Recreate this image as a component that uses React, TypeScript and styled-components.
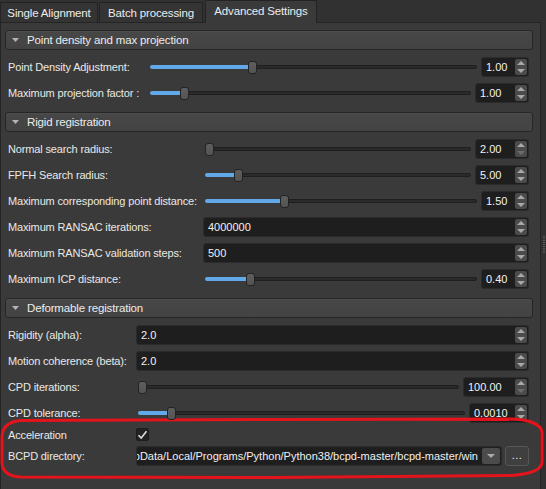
import React from 'react';
import styled, { createGlobalStyle } from 'styled-components';

const GlobalStyle = createGlobalStyle`
  html, body { margin: 0; padding: 0; background: #313131; }
  body {
    font-family: "Liberation Sans", Arial, sans-serif;
    font-size: 11px;
    letter-spacing: -0.15px;
    color: #e9e9e6;
  }
  * { box-sizing: border-box; }
`;

const Window = styled.div`
  position: relative;
  width: 546px;
  height: 489px;
  overflow: hidden;
  display: flex;
  background: #313131;
`;

const Main = styled.div`
  width: 541px;
  display: flex;
  flex-direction: column;
`;

const TabBar = styled.div`
  height: 22px;
  display: flex;
  align-items: flex-end;
`;

const Tab = styled.div<{ $w: number; $active?: boolean; $ml?: number }>`
  width: ${(p) => p.$w}px;
  margin-left: ${(p) => p.$ml ?? 0}px;
  height: ${(p) => (p.$active ? 23 : 20)}px;
  margin-bottom: ${(p) => (p.$active ? -1 : 0)}px;
  position: relative;
  z-index: ${(p) => (p.$active ? 1 : 0)};
  background: ${(p) => (p.$active ? '#3a3a3a' : '#343434')};
  border: 1px solid #232323;
  border-bottom: none;
  border-radius: 2px 2px 0 0;
  display: flex;
  align-items: center;
  justify-content: center;
  padding-bottom: ${(p) => (p.$active ? 2 : 0)}px;
  color: #ececec;
  font-size: 11.5px;
  white-space: nowrap;
`;

const Panel = styled.div`
  flex: 1;
  background: #3a3a3a;
  border: 1px solid #242424;
  border-bottom: none;
  padding: 7px 7px 0 4px;
  display: flex;
  flex-direction: column;
  gap: 9px;
`;

const Section = styled.div`
  display: flex;
  flex-direction: column;
  gap: 7px;
`;

const GroupHeader = styled.div`
  height: 20px;
  border: 1px solid #262626;
  border-radius: 3px;
  background: linear-gradient(#474747, #434343);
  box-shadow: inset 0 1px 0 #4e4e4e;
  display: flex;
  align-items: center;
  gap: 8px;
  padding-left: 6px;
  color: #ececec;
  font-size: 11.5px;
`;

const FormGrid = styled.div<{ $labelW: number }>`
  display: grid;
  grid-template-columns: ${(p) => p.$labelW}px 1fr;
  grid-auto-rows: auto;
  row-gap: 6px;
  padding: 0 4px 0 3px;
`;

const Label = styled.div<{ $h?: number }>`
  height: ${(p) => p.$h ?? 20}px;
  display: flex;
  align-items: center;
  white-space: nowrap;
`;

const Field = styled.div<{ $h?: number }>`
  height: ${(p) => p.$h ?? 20}px;
  display: flex;
  align-items: center;
  gap: 2px;
  min-width: 0;
`;

const SliderTrack = styled.div`
  flex: 1;
  margin: 0 2px;
  height: 20px;
  display: flex;
  align-items: center;
  min-width: 0;
`;

const GrooveFill = styled.div`
  height: 4px;
  background: #62a9e9;
  border-radius: 2px 0 0 2px;
  margin-right: -2px;
`;

const GrooveRest = styled.div`
  flex: 1;
  height: 4px;
  background: #2a2a2a;
  border: 1px solid #1f1f1f;
  border-radius: 0 2px 2px 0;
  margin-left: -2px;
`;

const Handle = styled.div`
  width: 9px;
  height: 13px;
  position: relative;
  z-index: 1;
  border: 1px solid #232323;
  border-radius: 3px;
  background: linear-gradient(#5e5e5e, #545454);
  flex: none;
`;

const SpinBox = styled.div<{ $w?: number }>`
  width: ${(p) => (p.$w ? `${p.$w}px` : '100%')};
  flex: none;
  height: 20px;
  background: #1e1e1e;
  border: 1px solid #2b2b2b;
  border-radius: 3px;
  display: flex;
  align-items: stretch;
`;

const SpinText = styled.div`
  flex: 1;
  display: flex;
  align-items: center;
  padding-left: 4px;
  color: #f2f2f2;
  letter-spacing: 0;
  overflow: hidden;
  white-space: nowrap;
`;

const SpinButtons = styled.div`
  width: 12px;
  margin: 1px 1px 1px 0;
  background: #4b4b4b;
  border-radius: 2px;
  display: flex;
  flex-direction: column;
  align-items: center;
  justify-content: center;
  gap: 4px;
`;

const Arrow = ({ down, dim }: { down?: boolean; dim?: boolean }) => (
  <svg width="8" height="4" viewBox="0 0 8 4">
    <polygon
      points={down ? '0,0 8,0 4,4' : '0,4 8,4 4,0'}
      fill={dim ? '#6c6c6c' : '#a9a9a9'}
    />
  </svg>
);

const CheckBox = styled.div`
  width: 13px;
  height: 13px;
  background: #232323;
  border: 1px solid #1c1c1c;
  border-radius: 2px;
  display: flex;
  align-items: center;
  justify-content: center;
`;

const Combo = styled.div`
  flex: 1;
  min-width: 0;
  height: 20px;
  background: #1e1e1e;
  border: 1px solid #2b2b2b;
  border-radius: 3px;
  display: flex;
  align-items: stretch;
`;

const ComboText = styled.div`
  flex: 1;
  min-width: 0;
  overflow: hidden;
  display: flex;
  justify-content: flex-end;
  align-items: center;
  padding-right: 3px;
  white-space: nowrap;
  color: #f0f0f0;
  letter-spacing: 0;
`;

const ComboButton = styled.div`
  width: 18px;
  margin: 1px;
  background: #4b4b4b;
  border-radius: 2px;
  display: flex;
  align-items: center;
  justify-content: center;
`;

const ToolButton = styled.div`
  width: 24px;
  height: 20px;
  flex: none;
  margin-left: 1px;
  background: #3f3f3f;
  border: 1px solid #575757;
  border-radius: 3px;
  display: flex;
  align-items: center;
  justify-content: center;
  padding-bottom: 2px;
  color: #e8e8e8;
  letter-spacing: 0.5px;
`;

const Splitter = styled.div`
  flex: 1;
  display: flex;
  align-items: center;
  justify-content: center;
  padding-left: 1px;
`;

const Grip = styled.div`
  width: 2px;
  height: 18px;
  background: repeating-linear-gradient(#5a5a5a 0 1px, #333 1px 2px);
`;

const Annotation = styled.svg`
  position: absolute;
  left: 0;
  top: 0;
  pointer-events: none;
`;

type Row =
  | { kind: 'slider'; label: string; frac: number; value: string; spinW: number; dimDown?: boolean }
  | { kind: 'spin'; label: string; value: string }
  | { kind: 'check'; label: string }
  | { kind: 'combo'; label: string; value: string };

type Group = { title: string; labelW: number; rows: Row[] };

const groups: Group[] = [
  {
    title: 'Point density and max projection',
    labelW: 140,
    rows: [
      { kind: 'slider', label: 'Point Density Adjustment:', frac: 0.308, value: '1.00', spinW: 48 },
      { kind: 'slider', label: 'Maximum projection factor :', frac: 0.095, value: '1.00', spinW: 54 },
    ],
  },
  {
    title: 'Rigid registration',
    labelW: 195,
    rows: [
      { kind: 'slider', label: 'Normal search radius:', frac: 0, value: '2.00', spinW: 54, dimDown: true },
      { kind: 'slider', label: 'FPFH Search radius:', frac: 0.113, value: '5.00', spinW: 54 },
      { kind: 'slider', label: 'Maximum corresponding point distance:', frac: 0.284, value: '1.50', spinW: 48 },
      { kind: 'spin', label: 'Maximum RANSAC iterations:', value: '4000000' },
      { kind: 'spin', label: 'Maximum RANSAC validation steps:', value: '500' },
      { kind: 'slider', label: 'Maximum ICP distance:', frac: 0.155, value: '0.40', spinW: 48 },
    ],
  },
  {
    title: 'Deformable registration',
    labelW: 128,
    rows: [
      { kind: 'spin', label: 'Rigidity (alpha):', value: '2.0' },
      { kind: 'spin', label: 'Motion coherence (beta):', value: '2.0' },
      { kind: 'slider', label: 'CPD iterations:', frac: 0, value: '100.00', spinW: 66, dimDown: true },
      { kind: 'slider', label: 'CPD tolerance:', frac: 0.09, value: '0.0010', spinW: 60 },
      { kind: 'check', label: 'Acceleration' },
      {
        kind: 'combo',
        label: 'BCPD directory:',
        value: 'pData/Local/Programs/Python/Python38/bcpd-master/bcpd-master/win',
      },
    ],
  },
];

const Spin = ({ value, w, dimDown }: { value: string; w?: number; dimDown?: boolean }) => (
  <SpinBox $w={w}>
    <SpinText>{value}</SpinText>
    <SpinButtons>
      <Arrow />
      <Arrow down dim={dimDown} />
    </SpinButtons>
  </SpinBox>
);

const renderField = (r: Row) => {
  switch (r.kind) {
    case 'slider':
      return (
        <Field>
          <SliderTrack>
            <GrooveFill style={{ width: `calc(${r.frac} * (100% - 9px) + 2px)` }} />
            <Handle />
            <GrooveRest />
          </SliderTrack>
          <Spin value={r.value} w={r.spinW} dimDown={r.dimDown} />
        </Field>
      );
    case 'spin':
      return (
        <Field>
          <Spin value={r.value} />
        </Field>
      );
    case 'check':
      return (
        <Field $h={11}>
          <CheckBox>
            <svg width="11" height="10" viewBox="0 0 11 10">
              <path d="M1.5 5.2 L4.2 8 L9.5 1.2" fill="none" stroke="#dcdcdc" strokeWidth="1.6" />
            </svg>
          </CheckBox>
        </Field>
      );
    case 'combo':
      return (
        <Field>
          <Combo>
            <ComboText>{r.value}</ComboText>
            <ComboButton>
              <Arrow down />
            </ComboButton>
          </Combo>
          <ToolButton>...</ToolButton>
        </Field>
      );
  }
};

export default function App() {
  return (
    <>
      <GlobalStyle />
      <Window>
        <Main>
          <TabBar>
            <Tab $w={98}>Single Alignment</Tab>
            <Tab $w={104} $ml={1}>Batch processing</Tab>
            <Tab $w={112} $ml={2} $active>
              Advanced Settings
            </Tab>
          </TabBar>
          <Panel>
            {groups.map((g) => (
              <Section key={g.title}>
                <GroupHeader>
                  <svg width="7" height="4" viewBox="0 0 7 4">
                    <polygon points="0,0 7,0 3.5,4" fill="#b4b4b4" />
                  </svg>
                  {g.title}
                </GroupHeader>
                <FormGrid $labelW={g.labelW}>
                  {g.rows.map((r) => (
                    <React.Fragment key={r.label}>
                      <Label $h={r.kind === 'check' ? 11 : 20}>{r.label}</Label>
                      {renderField(r)}
                    </React.Fragment>
                  ))}
                </FormGrid>
              </Section>
            ))}
          </Panel>
        </Main>
        <Splitter>
          <Grip />
        </Splitter>
        <Annotation width="546" height="489" viewBox="0 0 546 489">
          <path
            d="M20 420.5 L273 419.5 L510 419 C528 419 541 424 542 432 L542 462 C542 470 530 474 512 475.5 L273 477.5 L20 477 C6 476 2 470 2 462 L2 437 C2 428 8 422 20 420.5 Z"
            fill="none"
            stroke="#e5131b"
            strokeWidth="3"
          />
        </Annotation>
      </Window>
    </>
  );
}
